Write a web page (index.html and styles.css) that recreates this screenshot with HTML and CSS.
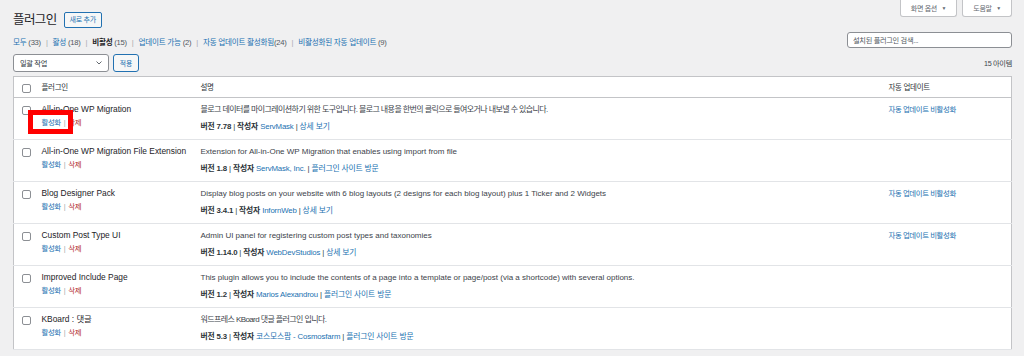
FILE: index.html
```html
<!DOCTYPE html>
<html lang="ko">
<head>
    <meta charset="UTF-8">
    <meta name="viewport" content="width=device-width, initial-scale=1.0">
    <title>플러그인</title>
    <link rel="stylesheet" href="styles.css">
</head>
<body>
    <div class="wrap">
        <div class="top-bar">
            <div class="heading">
                <h1>플러그인</h1>
                <a href="#" class="title-action">새로 추가</a>
            </div>
            <div class="screen-links">
                <button class="screen-tab">화면 옵션 <span class="arrow">▼</span></button>
                <button class="screen-tab">도움말 <span class="arrow">▼</span></button>
            </div>
        </div>

        <div class="filter-bar">
            <ul class="views">
                <li><a href="#">모두</a> <span class="num">(33)</span><span class="sep">|</span></li>
                <li><a href="#">활성</a> <span class="num">(18)</span><span class="sep">|</span></li>
                <li><b class="current">비활성</b> <span class="num">(15)</span><span class="sep">|</span></li>
                <li><a href="#">업데이트 가능</a> <span class="num">(2)</span><span class="sep">|</span></li>
                <li><a href="#">자동 업데이트 활성화됨</a><span class="num">(24)</span><span class="sep">|</span></li>
                <li><a href="#">비활성화된 자동 업데이트</a> <span class="num">(9)</span></li>
            </ul>
            <input type="search" class="search" placeholder="설치된 플러그인 검색...">
        </div>

        <div class="tablenav">
            <div class="bulk">
                <div class="select">
                    <span>일괄 작업</span>
                    <svg width="6" height="4" viewBox="0 0 6 4"><path d="M0.5 0.5 L3 3 L5.5 0.5" fill="none" stroke="#50575e" stroke-width="0.9"/></svg>
                </div>
                <button class="btn">적용</button>
            </div>
            <span class="count">15 아이템</span>
        </div>

        <table class="plugins">
            <colgroup>
                <col class="col-check">
                <col class="col-name">
                <col class="col-desc">
                <col>
            </colgroup>
            <thead>
                <tr>
                    <th class="check"><span class="cb"></span></th>
                    <th>플러그인</th>
                    <th>설명</th>
                    <th>자동 업데이트</th>
                </tr>
            </thead>
            <tbody>
                <tr>
                    <td class="check"><span class="cb"></span></td>
                    <td>
                        <div class="plugin-title">All-in-One WP Migration</div>
                        <div class="row-actions"><a href="#">활성화</a><span class="sep">|</span><a href="#" class="delete">삭제</a></div>
                    </td>
                    <td>
                        <p class="desc ko">블로그 데이터를 마이그레이션하기 위한 도구입니다. 블로그 내용을 한번의 클릭으로 들여오거나 내보낼 수 있습니다.</p>
                        <p class="meta">버전 7.78 <span class="sep">|</span> 작성자 <a href="#">ServMask</a> <span class="sep">|</span> <a href="#">상세 보기</a></p>
                    </td>
                    <td><a href="#" class="auto">자동 업데이트 비활성화</a></td>
                </tr>
                <tr>
                    <td class="check"><span class="cb"></span></td>
                    <td>
                        <div class="plugin-title">All-in-One WP Migration File Extension</div>
                        <div class="row-actions"><a href="#">활성화</a><span class="sep">|</span><a href="#" class="delete">삭제</a></div>
                    </td>
                    <td>
                        <p class="desc">Extension for All-in-One WP Migration that enables using import from file</p>
                        <p class="meta">버전 1.8 <span class="sep">|</span> 작성자 <a href="#">ServMask, Inc.</a> <span class="sep">|</span> <a href="#">플러그인 사이트 방문</a></p>
                    </td>
                    <td></td>
                </tr>
                <tr>
                    <td class="check"><span class="cb"></span></td>
                    <td>
                        <div class="plugin-title">Blog Designer Pack</div>
                        <div class="row-actions"><a href="#">활성화</a><span class="sep">|</span><a href="#" class="delete">삭제</a></div>
                    </td>
                    <td>
                        <p class="desc">Display blog posts on your website with 6 blog layouts (2 designs for each blog layout) plus 1 Ticker and 2 Widgets</p>
                        <p class="meta">버전 3.4.1 <span class="sep">|</span> 작성자 <a href="#">InfornWeb</a> <span class="sep">|</span> <a href="#">상세 보기</a></p>
                    </td>
                    <td><a href="#" class="auto">자동 업데이트 비활성화</a></td>
                </tr>
                <tr>
                    <td class="check"><span class="cb"></span></td>
                    <td>
                        <div class="plugin-title">Custom Post Type UI</div>
                        <div class="row-actions"><a href="#">활성화</a><span class="sep">|</span><a href="#" class="delete">삭제</a></div>
                    </td>
                    <td>
                        <p class="desc">Admin UI panel for registering custom post types and taxonomies</p>
                        <p class="meta">버전 1.14.0 <span class="sep">|</span> 작성자 <a href="#">WebDevStudios</a> <span class="sep">|</span> <a href="#">상세 보기</a></p>
                    </td>
                    <td><a href="#" class="auto">자동 업데이트 비활성화</a></td>
                </tr>
                <tr>
                    <td class="check"><span class="cb"></span></td>
                    <td>
                        <div class="plugin-title">Improved Include Page</div>
                        <div class="row-actions"><a href="#">활성화</a><span class="sep">|</span><a href="#" class="delete">삭제</a></div>
                    </td>
                    <td>
                        <p class="desc">This plugin allows you to include the contents of a page into a template or page/post (via a shortcode) with several options.</p>
                        <p class="meta">버전 1.2 <span class="sep">|</span> 작성자 <a href="#">Marios Alexandrou</a> <span class="sep">|</span> <a href="#">플러그인 사이트 방문</a></p>
                    </td>
                    <td></td>
                </tr>
                <tr>
                    <td class="check"><span class="cb"></span></td>
                    <td>
                        <div class="plugin-title">KBoard : 댓글</div>
                        <div class="row-actions"><a href="#">활성화</a><span class="sep">|</span><a href="#" class="delete">삭제</a></div>
                    </td>
                    <td>
                        <p class="desc ko">워드프레스 KBoard 댓글 플러그인 입니다.</p>
                        <p class="meta">버전 5.3 <span class="sep">|</span> 작성자 <a href="#">코스모스팜 - Cosmosfarm</a> <span class="sep">|</span> <a href="#">플러그인 사이트 방문</a></p>
                    </td>
                    <td></td>
                </tr>
            </tbody>
        </table>
    </div>

    <div class="highlight"></div>
</body>
</html>
```

FILE: styles.css
```css
body {
    margin: 0;
    background-color: #f0f0f1;
    color: #3c434a;
    font-family: "Liberation Sans", "Noto Sans CJK KR", sans-serif;
    font-size: 8px;
}

a {
    color: #2271b1;
    text-decoration: none;
}

.wrap {
    padding: 0 12px 0 13px;
}

/* heading + screen options */
.top-bar {
    display: flex;
    justify-content: space-between;
    align-items: flex-start;
    height: 28px;
}

.heading {
    display: flex;
    align-items: center;
    gap: 7px;
    margin-top: 12px;
}

h1 {
    margin: 0;
    font-size: 12.5px;
    font-weight: 400;
    line-height: 16px;
    letter-spacing: -0.6px;
    color: #1d2327;
}

.title-action {
    display: inline-block;
    height: 16px;
    box-sizing: border-box;
    padding: 0 5px;
    border: 1px solid #2271b1;
    border-radius: 2px;
    background: #f6f7f7;
    font-size: 7px;
    line-height: 14px;
    letter-spacing: -0.3px;
}

.screen-links {
    display: flex;
    gap: 5px;
}

.screen-tab {
    height: 17px;
    padding: 0 10px;
    border: 1px solid #c3c4c7;
    border-top: none;
    border-radius: 0 0 3px 3px;
    background: #fff;
    color: #646970;
    font-family: inherit;
    font-size: 7px;
    letter-spacing: -0.3px;
}

.screen-tab .arrow {
    font-size: 5px;
    margin-left: 3px;
    vertical-align: 1px;
}

/* filter links + search */
.filter-bar {
    display: flex;
    justify-content: space-between;
    align-items: flex-end;
    margin-top: 4px;
}

.views {
    display: flex;
    margin: 0;
    padding: 0;
    list-style: none;
    line-height: 11px;
    font-size: 7.6px;
    letter-spacing: -0.25px;
}

.views .num {
    color: #50575e;
}

.views .sep {
    color: #a7aaad;
    margin: 0 5px;
}

.views .current {
    color: #1d2327;
    font-weight: 700;
}

.search {
    width: 165px;
    height: 16px;
    box-sizing: border-box;
    margin: 0;
    padding: 0 5px;
    border: 1px solid #8c8f94;
    border-radius: 3px;
    background: #fff;
    font-family: inherit;
    font-size: 7.2px;
    letter-spacing: -0.3px;
}

.search::placeholder {
    color: #50575e;
}

/* bulk actions */
.tablenav {
    display: flex;
    justify-content: space-between;
    align-items: center;
    margin-top: 6px;
    height: 18px;
}

.bulk {
    display: flex;
    gap: 4px;
}

.select {
    display: flex;
    justify-content: space-between;
    align-items: center;
    width: 96px;
    height: 18px;
    box-sizing: border-box;
    padding: 0 6px;
    border: 1px solid #8c8f94;
    border-radius: 3px;
    background: #fff;
    color: #2c3338;
    font-size: 7.2px;
    letter-spacing: -0.3px;
}

.btn {
    width: 26px;
    height: 18px;
    padding: 0;
    border: 1px solid #2271b1;
    border-radius: 3px;
    background: #f6f7f7;
    color: #2271b1;
    font-family: inherit;
    font-size: 6.8px;
}

.count {
    font-size: 7.2px;
    color: #3c434a;
    letter-spacing: -0.3px;
}

/* plugin table */
.plugins {
    width: 100%;
    margin-top: 4px;
    border: 1px solid #c3c4c7;
    border-collapse: collapse;
    table-layout: fixed;
    background: #fff;
}

.col-check {
    width: 28px;
}

.col-name {
    width: 159px;
}

.col-desc {
    width: 688px;
}

.plugins th {
    height: 21px;
    box-sizing: border-box;
    padding: 5px 0 0;
    border-bottom: 1px solid #c3c4c7;
    vertical-align: top;
    text-align: left;
    font-weight: 400;
    font-size: 7.5px;
    color: #2c3338;
    line-height: 11px;
    letter-spacing: -0.3px;
}

.plugins td {
    height: 35px;
    padding: 6px 10px 0 0;
    border-bottom: 1px solid #e2e4e7;
    vertical-align: top;
    line-height: 11px;
}

.plugins .check {
    padding: 8px 0 0 8px;
}

.plugins td.check {
    height: 33px;
}

.plugins th.check {
    padding-top: 7px;
}

.cb {
    display: block;
    width: 9px;
    height: 9px;
    box-sizing: border-box;
    border: 1px solid #8c8f94;
    border-radius: 2px;
    background: #fff;
}

.plugin-title {
    font-size: 8.4px;
    color: #1d2327;
}

.row-actions {
    margin-top: 2px;
    font-size: 7.4px;
    letter-spacing: -0.4px;
}

.row-actions .sep {
    color: #a7aaad;
    margin: 0 3px;
}

.row-actions .delete {
    color: #b32d2e;
}

.desc {
    margin: 0 0 6px;
}

.desc.ko {
    letter-spacing: -0.6px;
}

.meta {
    margin: 0;
    font-weight: 700;
    color: #2c3338;
    font-size: 7.8px;
    letter-spacing: -0.15px;
}

.meta a {
    font-weight: 400;
}

.meta .sep {
    font-weight: 400;
}

.auto {
    font-size: 7.4px;
    letter-spacing: -0.4px;
}

/* annotation box over the first row */
.highlight {
    position: absolute;
    left: 28px;
    top: 110px;
    width: 45px;
    height: 24px;
    box-sizing: border-box;
    border: 5px solid #f00;
}
```
